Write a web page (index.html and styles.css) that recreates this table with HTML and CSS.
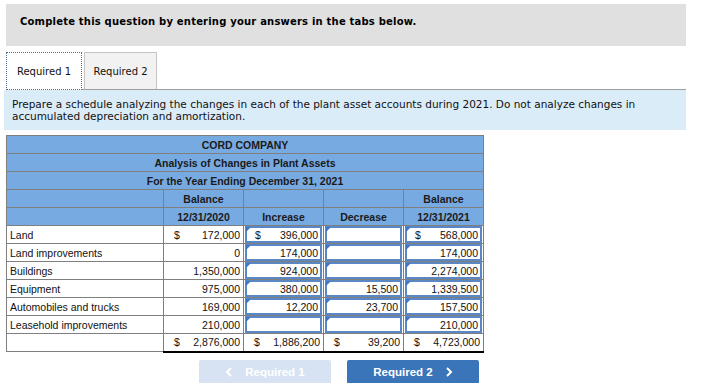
FILE: index.html
```html
<!DOCTYPE html>
<html>
<head>
<meta charset="utf-8">
<link rel="stylesheet" href="styles.css">
</head>
<body>
<div class="page">
  <div class="prompt">Complete this question by entering your answers in the tabs below.</div>
  <div class="tabs">
    <div class="tab active">Required 1</div>
    <div class="tab">Required 2</div>
  </div>
  <div class="instructions">Prepare a schedule analyzing the changes in each of the plant asset accounts during 2021. Do not analyze changes in accumulated depreciation and amortization.</div>
  <table class="sched">
    <colgroup>
      <col class="c-label"><col class="c-num"><col class="c-num"><col class="c-num"><col class="c-num">
    </colgroup>
    <tr class="hd"><td colspan="5">CORD COMPANY</td></tr>
    <tr class="hd"><td colspan="5">Analysis of Changes in Plant Assets</td></tr>
    <tr class="hd"><td colspan="5">For the Year Ending December 31, 2021</td></tr>
    <tr class="hd"><td></td><td>Balance</td><td></td><td></td><td>Balance</td></tr>
    <tr class="hd"><td></td><td>12/31/2020</td><td>Increase</td><td>Decrease</td><td>12/31/2021</td></tr>
    <tr>
      <td class="lbl">Land</td>
      <td class="val"><div class="cell"><span>$</span><span>172,000</span></div></td>
      <td class="in"><div class="inp"><span>$</span><span>396,000</span></div></td>
      <td class="in"><div class="inp"></div></td>
      <td class="in"><div class="inp"><span>$</span><span>568,000</span></div></td>
    </tr>
    <tr>
      <td class="lbl">Land improvements</td>
      <td class="val"><div class="cell"><span></span><span>0</span></div></td>
      <td class="in"><div class="inp"><span></span><span>174,000</span></div></td>
      <td class="in"><div class="inp"></div></td>
      <td class="in"><div class="inp"><span></span><span>174,000</span></div></td>
    </tr>
    <tr>
      <td class="lbl">Buildings</td>
      <td class="val"><div class="cell"><span></span><span>1,350,000</span></div></td>
      <td class="in"><div class="inp"><span></span><span>924,000</span></div></td>
      <td class="in"><div class="inp"></div></td>
      <td class="in"><div class="inp"><span></span><span>2,274,000</span></div></td>
    </tr>
    <tr>
      <td class="lbl">Equipment</td>
      <td class="val"><div class="cell"><span></span><span>975,000</span></div></td>
      <td class="in"><div class="inp"><span></span><span>380,000</span></div></td>
      <td class="in"><div class="inp"><span></span><span>15,500</span></div></td>
      <td class="in"><div class="inp"><span></span><span>1,339,500</span></div></td>
    </tr>
    <tr>
      <td class="lbl">Automobiles and trucks</td>
      <td class="val"><div class="cell"><span></span><span>169,000</span></div></td>
      <td class="in"><div class="inp"><span></span><span>12,200</span></div></td>
      <td class="in"><div class="inp"><span></span><span>23,700</span></div></td>
      <td class="in"><div class="inp"><span></span><span>157,500</span></div></td>
    </tr>
    <tr>
      <td class="lbl">Leasehold improvements</td>
      <td class="val"><div class="cell"><span></span><span>210,000</span></div></td>
      <td class="in"><div class="inp"></div></td>
      <td class="in"><div class="inp"></div></td>
      <td class="in"><div class="inp"><span></span><span>210,000</span></div></td>
    </tr>
    <tr class="total">
      <td class="lbl"></td>
      <td class="val"><div class="cell"><span>$</span><span>2,876,000</span></div></td>
      <td class="val"><div class="cell"><span>$</span><span>1,886,200</span></div></td>
      <td class="val"><div class="cell"><span>$</span><span>39,200</span></div></td>
      <td class="val"><div class="cell"><span>$</span><span>4,723,000</span></div></td>
    </tr>
  </table>
  <div class="nav">
    <button class="btn prev"><svg width="8" height="10" viewBox="0 0 8 10"><path d="M6 1 L2 5 L6 9" fill="none" stroke="#fff" stroke-width="2"/></svg>Required 1</button>
    <button class="btn next">Required 2<svg width="8" height="10" viewBox="0 0 8 10"><path d="M2 1 L6 5 L2 9" fill="none" stroke="#fff" stroke-width="2"/></svg></button>
  </div>
</div>
</body>
</html>
```

FILE: styles.css
```css
html, body {
  margin: 0;
  padding: 0;
  background: #ffffff;
}
.page {
  padding: 4px 0 0 6px;
  width: 680px;
  font-family: "DejaVu Sans", Verdana, sans-serif;
  color: #000;
}
.prompt {
  background: #e0e0e0;
  height: 42px;
  box-sizing: border-box;
  padding: 12px 0 0 14px;
  font-size: 10px;
  font-weight: bold;
  letter-spacing: 0.2px;
}
.tabs {
  display: flex;
  gap: 2px;
  margin-top: 6px;
  border-bottom: 1px solid #a0a0a0;
  height: 37px;
}
.tab {
  display: flex;
  align-items: center;
  justify-content: center;
  font-size: 10px;
  color: #111;
  box-sizing: border-box;
  height: 37px;
  border: 1px solid #c4c4c4;
  border-bottom: none;
  background: #f2f2f2;
  width: 73px;
}
.tab.active {
  background: #fff;
  width: 76px;
  border: 1px dotted #4a6f9c;
  height: 38px;
  margin-bottom: -1px;
}
.instructions {
  background: #dbecf9;
  font-size: 10.5px;
  line-height: 12px;
  color: #111;
  padding: 8px 8px 8px 8px;
  margin-left: -2px;
}
.sched {
  margin-top: 5px;
  border-collapse: collapse;
  font-family: "Liberation Sans", Arial, sans-serif;
  font-size: 10.5px;
  width: 477px;
  table-layout: fixed;
}
.c-label { width: 157px; }
.c-num { width: 80px; }
.sched td {
  border: 1px solid #7f7f7f;
  height: 18px;
  padding: 0;
  box-sizing: border-box;
}
.hd td {
  background: #78aae2;
  text-align: center;
  font-weight: bold;
  color: #1a1a1a;
}
.lbl {
  padding-left: 3px !important;
  color: #111;
}
.cell {
  display: flex;
  justify-content: space-between;
  padding: 0 3px 0 10px;
  color: #111;
}
.sched td.in {
  padding: 0 1px;
}
.inp {
  position: relative;
  height: 17px;
  box-sizing: border-box;
  border: 2px solid #5a88c4;
  display: flex;
  justify-content: space-between;
  align-items: center;
  padding: 0 2px 0 8px;
  background: #fff;
  color: #111;
}
.inp::before {
  content: "";
  position: absolute;
  left: -1px;
  top: -1px;
  border-top: 5px solid #3b78c6;
  border-right: 5px solid transparent;
}
.total td {
  border-top: 1px solid #333;
}
.total td.val {
  border-bottom: 2px solid #000;
}
.nav {
  display: flex;
  gap: 16px;
  padding-left: 193px;
  margin-top: 7px;
}
.btn {
  width: 132px;
  height: 24px;
  border: none;
  border-radius: 2px;
  font-family: "Liberation Sans", Arial, sans-serif;
  font-size: 11.5px;
  font-weight: bold;
  color: #fff;
  display: flex;
  align-items: center;
  justify-content: center;
  gap: 12px;
}
.btn.prev {
  background: #d7e3f2;
}
.btn.next {
  background: #3a75b9;
}
```
